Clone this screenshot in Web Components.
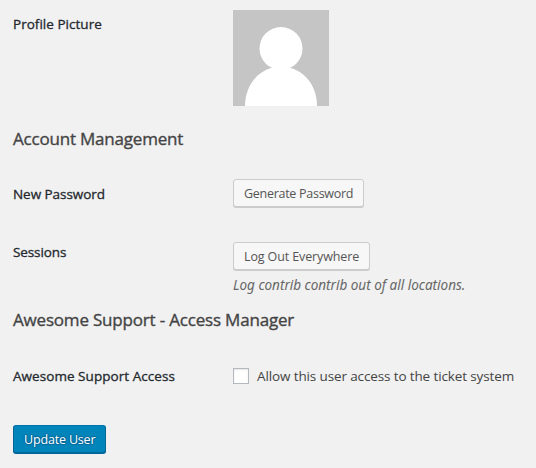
<!DOCTYPE html>
<html lang="en"><head><meta charset="utf-8"><title>Edit User</title>
<style>
html,body{margin:0;background:#f1f1f1}
body{font-family:"Open Sans","Noto Sans",sans-serif;color:#444}
</style></head><body>
<profile-form>
  <setting-row label="Profile Picture" style="--h:132px;--label-top:14px;--top:10px;--ls:.03px"><user-avatar></user-avatar></setting-row>
  <section-title style="--ls:-.2px">Account Management</section-title>
  <setting-row label="New Password" style="--h:58px;--label-top:20px;--top:15px;--ls:-.05px"><action-button style="--ls:-.28px">Generate Password</action-button></setting-row>
  <setting-row label="Sessions" style="--h:91px;--label-top:20px;--top:20px;--ls:-.1px"><action-button style="--ls:-.12px">Log Out Everywhere</action-button><help-text>Log contrib contrib out of all locations.</help-text></setting-row>
  <section-title style="--ls:-.19px">Awesome Support - Access Manager</section-title>
  <setting-row label="Awesome Support Access" style="--h:80px;--label-top:21px;--top:21px;--ls:.05px"><check-option>Allow this user access to the ticket system</check-option></setting-row>
  <action-button primary style="--ls:-.17px">Update User</action-button>
</profile-form>
<script>
const define = (name, html, setup) => {
  const template = document.createElement('template');
  template.innerHTML = html;
  customElements.define(name, class extends HTMLElement {
    constructor() {
      super();
      this.attachShadow({mode: 'open'}).append(template.content.cloneNode(true));
    }
    connectedCallback() { if (setup) setup(this); }
  });
};

define('profile-form', `<style>
:host{display:flex;flex-direction:column;align-items:flex-start;box-sizing:border-box;height:468px;padding:0 13px;overflow:hidden}
</style><slot></slot>`);

define('setting-row', `<style>
:host{display:grid;grid-template-columns:220px 1fr;box-sizing:border-box;width:100%;height:var(--h);flex:none}
.label{padding-top:var(--label-top);font-size:13.5px;line-height:20px;color:#23282d;-webkit-text-stroke:.3px #23282d;letter-spacing:var(--ls);white-space:nowrap}
.field{padding-top:var(--top);display:flex;flex-direction:column;align-items:flex-start;min-width:0}
</style><div class="label"></div><div class="field"><slot></slot></div>`,
  el => { el.shadowRoot.querySelector('.label').textContent = el.getAttribute('label'); });

define('section-title', `<style>
:host{display:block;flex:none}
h2{margin:0;padding:0 0 18px;height:14px;font-size:17px;font-weight:400;line-height:14px;color:#444;-webkit-text-stroke:.35px #444;letter-spacing:var(--ls);white-space:nowrap}
</style><h2><slot></slot></h2>`);

define('user-avatar', `<style>:host,svg{display:block;width:96px;height:96px}</style>
<svg viewBox="0 0 96 96"><path fill="#c5c5c5" d="M0 0h96v96H0z"/><circle cx="48" cy="38.500" r="21.5" fill="#fff"/><path fill="#fff" d="M12 96C12 77 23 62.500 38 58H58C73 62.500 84 77 84 96Z"/></svg>`);

define('action-button', `<style>
:host{display:block;flex:none}
button{display:block;box-sizing:border-box;height:28px;margin:0;padding:1px 10px 0;border:1px solid #ccc;border-radius:3px;background:#f7f7f7;box-shadow:0 1px 0 #ccc;color:#555;font:12.5px/25px "Open Sans","Noto Sans",sans-serif;letter-spacing:var(--ls);white-space:nowrap}
:host([primary]) button{background:#0085ba;border-color:#0073aa #006799 #006799;box-shadow:0 1px 0 #006799;color:#fff;text-shadow:0 -1px 1px #006799,1px 0 1px #006799,0 1px 1px #006799,-1px 0 1px #006799}
</style><button type="button"><slot></slot></button>`);

define('help-text', `<style>
:host{display:block;margin-top:5px;font:italic 13.5px/20px "Noto Sans",sans-serif;color:#666;white-space:nowrap}
</style><slot></slot>`);

define('check-option', `<style>
label{display:flex;align-items:center;gap:8px;height:20px;font-size:13.5px;line-height:20px;letter-spacing:-.125px;white-space:nowrap}
input{appearance:none;box-sizing:border-box;width:16px;height:16px;margin:0;border:1px solid #b4b9be;background:#fff;box-shadow:inset 0 1px 2px rgba(0,0,0,.1)}
</style><label><input type="checkbox"><span><slot></slot></span></label>`);
</script></body></html>
